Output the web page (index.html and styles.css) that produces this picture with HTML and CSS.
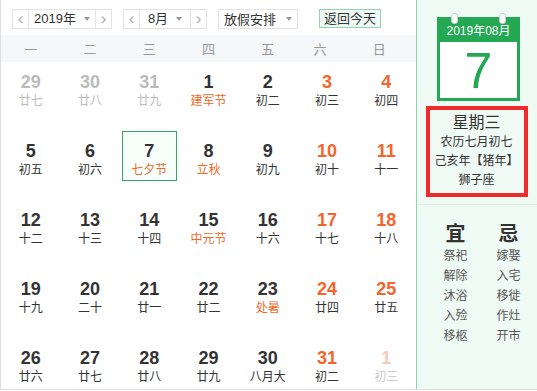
FILE: index.html
```html
<!DOCTYPE html>
<html lang="zh-CN">
<head>
    <meta charset="UTF-8">
    <title>万年历</title>
    <link rel="stylesheet" href="styles.css">
</head>
<body>
<div class="calendar">
    <div class="main">
        <!-- toolbar -->
        <div class="toolbar">
            <div class="picker">
                <span class="arrow">&lsaquo;</span>
                <span class="value year">2019年<i class="caret"></i></span>
                <span class="arrow">&rsaquo;</span>
            </div>
            <div class="picker month-picker">
                <span class="arrow">&lsaquo;</span>
                <span class="value month">8月<i class="caret"></i></span>
                <span class="arrow">&rsaquo;</span>
            </div>
            <div class="holiday">放假安排<i class="caret"></i></div>
            <button class="today-btn">返回今天</button>
        </div>
        <!-- week header -->
        <div class="week">
            <span>一</span><span>二</span><span>三</span><span>四</span><span>五</span><span class="sat">六</span><span class="sun">日</span>
        </div>
        <!-- days -->
        <div class="days">
            <div class="day other"><b>29</b><em>廿七</em></div>
            <div class="day other"><b>30</b><em>廿八</em></div>
            <div class="day other"><b>31</b><em>廿九</em></div>
            <div class="day"><b>1</b><em class="fest">建军节</em></div>
            <div class="day"><b>2</b><em>初二</em></div>
            <div class="day weekend"><b>3</b><em>初三</em></div>
            <div class="day weekend"><b>4</b><em>初四</em></div>

            <div class="day"><b>5</b><em>初五</em></div>
            <div class="day"><b>6</b><em>初六</em></div>
            <div class="day selected"><b>7</b><em class="fest">七夕节</em></div>
            <div class="day"><b>8</b><em class="fest">立秋</em></div>
            <div class="day"><b>9</b><em>初九</em></div>
            <div class="day weekend"><b>10</b><em>初十</em></div>
            <div class="day weekend"><b>11</b><em>十一</em></div>

            <div class="day"><b>12</b><em>十二</em></div>
            <div class="day"><b>13</b><em>十三</em></div>
            <div class="day"><b>14</b><em>十四</em></div>
            <div class="day"><b>15</b><em class="fest">中元节</em></div>
            <div class="day"><b>16</b><em>十六</em></div>
            <div class="day weekend"><b>17</b><em>十七</em></div>
            <div class="day weekend"><b>18</b><em>十八</em></div>

            <div class="day"><b>19</b><em>十九</em></div>
            <div class="day"><b>20</b><em>二十</em></div>
            <div class="day"><b>21</b><em>廿一</em></div>
            <div class="day"><b>22</b><em>廿二</em></div>
            <div class="day"><b>23</b><em class="fest">处暑</em></div>
            <div class="day weekend"><b>24</b><em>廿四</em></div>
            <div class="day weekend"><b>25</b><em>廿五</em></div>

            <div class="day"><b>26</b><em>廿六</em></div>
            <div class="day"><b>27</b><em>廿七</em></div>
            <div class="day"><b>28</b><em>廿八</em></div>
            <div class="day"><b>29</b><em>廿九</em></div>
            <div class="day"><b>30</b><em>八月大</em></div>
            <div class="day weekend"><b>31</b><em>初二</em></div>
            <div class="day other weekend"><b>1</b><em>初三</em></div>
        </div>
    </div>

    <!-- side panel -->
    <div class="side">
        <div class="page">
            <i class="ring left"></i>
            <i class="ring right"></i>
            <div class="page-head">2019年08月</div>
            <div class="page-body">7</div>
        </div>
        <div class="info">
            <div class="weekday">星期三</div>
            <div>农历七月初七</div>
            <div>己亥年【猪年】</div>
            <div>狮子座</div>
        </div>
        <div class="almanac">
            <div class="col">
                <h3>宜</h3>
                <span>祭祀</span><span>解除</span><span>沐浴</span><span>入殓</span><span>移柩</span>
            </div>
            <div class="col">
                <h3>忌</h3>
                <span>嫁娶</span><span>入宅</span><span>移徙</span><span>作灶</span><span>开市</span>
            </div>
        </div>
    </div>
</div>
</body>
</html>
```

FILE: styles.css
```css
body {
    margin: 0;
    font-family: Arial, "Liberation Sans", "Noto Sans CJK SC", sans-serif;
    color: #333;
    background: #fff;
}
.calendar {
    display: flex;
    width: 536px;
    height: 389px;
    border-left: 1px solid #ddd;
    border-bottom: 1px solid #ddd;
}
.main {
    width: 415px;
}

/* toolbar */
.toolbar {
    display: flex;
    align-items: center;
    height: 35px;
    padding-left: 11px;
    padding-top: 2px;
    box-sizing: border-box;
    font-size: 13px;
}
.picker {
    display: flex;
    height: 20px;
    border: 1px solid #e3e3e3;
    box-sizing: border-box;
    margin-right: 11px;
}
.arrow {
    width: 15px;
    text-align: center;
    line-height: 17px;
    font-size: 17px;
    color: #aaa;
}
.arrow:first-child {
    border-right: 1px solid #e3e3e3;
}
.arrow:last-child {
    border-left: 1px solid #e3e3e3;
}
.value {
    display: flex;
    align-items: center;
    justify-content: center;
    line-height: 18px;
    color: #333;
}
.value.year {
    width: 66px;
}
.value.month {
    width: 50px;
}
.caret {
    display: inline-block;
    margin-left: 8px;
    border-left: 3.5px solid transparent;
    border-right: 3.5px solid transparent;
    border-top: 4px solid #999;
}
.holiday {
    display: flex;
    align-items: center;
    justify-content: center;
    width: 80px;
    height: 20px;
    border: 1px solid #e3e3e3;
    box-sizing: border-box;
    color: #333;
}
.holiday .caret {
    margin-left: 10px;
}
.today-btn {
    margin-left: 21px;
    height: 19px;
    padding: 0 4px;
    border: 1px solid #97d2ae;
    background: #f0faf4;
    font-family: inherit;
    font-size: 13px;
    color: #333;
    line-height: 17px;
}

/* week header */
.week {
    display: grid;
    grid-template-columns: repeat(7, 1fr);
    height: 27px;
    background: #f5f7f8;
    align-items: center;
    font-size: 13px;
    color: #999;
}
.week span {
    text-align: center;
}
.week .sat,
.week .sun {
    margin-right: 14px;
}

/* days */
.days {
    display: grid;
    grid-template-columns: repeat(7, 1fr);
    grid-auto-rows: 69px;
}
.day {
    justify-self: center;
    width: 55px;
    height: 50px;
    box-sizing: border-box;
    padding-top: 10px;
    text-align: center;
}
.day b {
    display: block;
    font-size: 18px;
    line-height: 20px;
    color: #333;
}
.day em {
    display: block;
    font-style: normal;
    font-size: 12px;
    line-height: 18px;
    color: #333;
}
.day.weekend b {
    color: #f5642a;
}
.day .fest {
    color: #ee6a2a;
}
.day.other b,
.day.other em {
    color: #bbb;
}
.day.other.weekend b {
    color: #f9cbb6;
}
.day.other.weekend em {
    color: #ccc;
}
.day.selected {
    border: 1px solid #3aa66a;
    background: #f7fffb;
    padding-top: 9px;
}

/* side panel */
.side {
    width: 120px;
    border-left: 1px solid #8fd2aa;
    background: #f0faf4;
    display: flex;
    flex-direction: column;
    align-items: center;
}
.page {
    position: relative;
    width: 83px;
    margin-top: 17px;
    margin-left: 3px;
    background: #24a854;
    padding: 0 3px 3px;
    box-sizing: border-box;
}
.ring {
    position: absolute;
    top: -4px;
    width: 5px;
    height: 9px;
    border: 1px solid #ccc;
    border-radius: 3px;
    background: #fff;
}
.ring.left {
    left: 14px;
}
.ring.right {
    right: 14px;
}
.page-head {
    height: 25px;
    line-height: 28px;
    text-align: center;
    color: #fff;
    font-size: 12px;
}
.page-body {
    background: #fff;
    height: 56px;
    line-height: 58px;
    text-align: center;
    font-size: 50px;
    color: #24a854;
}
.info {
    width: 102px;
    margin-top: 5px;
    margin-right: 1px;
    border: 4px solid #ee2b2b;
    box-sizing: border-box;
    padding: 3px 0;
    text-align: center;
    font-size: 12px;
    line-height: 19px;
    color: #333;
}
.info .weekday {
    font-size: 16px;
    line-height: 20px;
}
.almanac {
    display: flex;
    gap: 29px;
    margin-top: 7px;
    padding-top: 17px;
    padding-left: 10px;
    width: 100%;
    box-sizing: border-box;
    justify-content: center;
    border-top: 1px solid #dcefe3;
}
.almanac .col {
    display: flex;
    flex-direction: column;
    align-items: center;
    font-size: 12px;
    line-height: 20px;
    color: #555;
}
.almanac h3 {
    margin: 0;
    font-size: 20px;
    line-height: 24px;
    color: #333;
}
```
